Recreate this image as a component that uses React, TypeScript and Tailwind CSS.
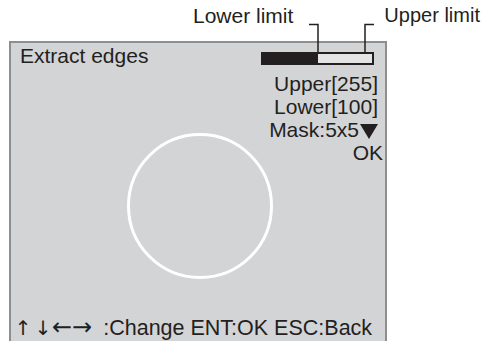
export default function App() {
  return (
    <div className="relative w-[489px] h-[341px] overflow-hidden bg-white text-[#231f20] font-['Liberation_Sans',Arial,sans-serif] text-[21px] leading-[23px]">
      {/* labels above the screen */}
      <div className="h-[41px] flex items-start pt-[4px]">
        <span className="ml-[193px]">Lower limit</span>
        <span className="ml-[91px] text-[20px]">Upper limit</span>
      </div>

      {/* screen panel */}
      <div className="ml-[9px] w-[378px] h-[300px] border-l-2 border-r-2 border-t-2 border-[#8d8e90] bg-[#d3d4d6] flex flex-col">
        <div className="flex">
          <div className="w-[240px] shrink-0 pl-[9px] pt-[1px] flex flex-col items-start">
            <span>Extract edges</span>
            <div className="ml-[107px] mt-[66px] w-[146px] h-[146px] shrink-0 rounded-full border-[3px] border-white" />
          </div>
          <div className="flex-1 flex flex-col items-end pr-[7px]">
            <div className="mt-[9px] mr-[4px] w-[113px] h-[13px] border-2 border-[#231f20] bg-[#e4e4e4] flex">
              <div className="w-[55px] h-full bg-[#231f20]" />
            </div>
            <span className="mt-[7px]">Upper[255]</span>
            <span>Lower[100]</span>
            <span className="flex items-center">
              Mask:5x5
              <svg width="18" height="16" viewBox="0 0 18 16" className="ml-[1px] mt-[2px]">
                <polygon points="0,1 18,1 9,16" fill="#231f20" />
              </svg>
            </span>
            <span className="-mr-[5px]">OK</span>
          </div>
        </div>
        <div className="mt-auto pl-[6px] pb-[1px] whitespace-nowrap flex items-baseline">
          <span className="w-[12px] flex justify-center font-['DejaVu_Sans',sans-serif] text-[20px]">↑</span>
          <span className="ml-[8px] w-[12px] flex justify-center font-['DejaVu_Sans',sans-serif] text-[20px]">↓</span>
          <span className="ml-[3px] font-['DejaVu_Sans',sans-serif] text-[24px]">←→</span>
          <span className="ml-[11px] text-[21.5px]">:Change ENT:OK ESC:Back</span>
        </div>
      </div>

      {/* leader lines */}
      <svg className="absolute inset-0 pointer-events-none" width="489" height="341">
        <polyline points="309,24.5 318,24.5 318,53" fill="none" stroke="#231f20" strokeWidth="1.5" />
        <polyline points="374,24.5 365,24.5 365,53" fill="none" stroke="#231f20" strokeWidth="1.5" />
      </svg>
    </div>
  )
}
